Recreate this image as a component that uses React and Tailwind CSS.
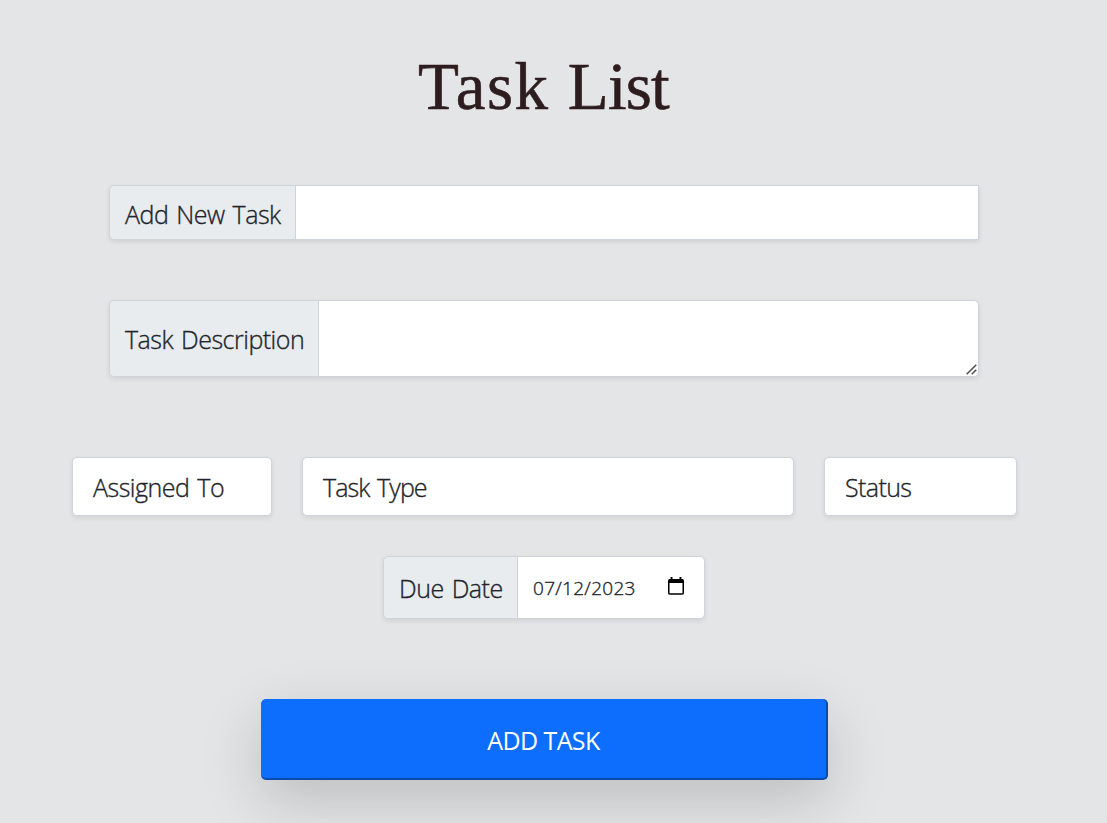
function FieldLabel({ children, className }) {
  return (
    <span
      className={`flex shrink-0 items-center whitespace-nowrap rounded-l-[5px] border border-[#ced4da] bg-[#e9ecef] pl-[15px] text-[25px] leading-[37px] [word-spacing:2px] ${className}`}
    >
      {children}
    </span>
  );
}

function Picker({ children, className }) {
  return (
    <button
      type="button"
      className={`flex h-[59px] items-center whitespace-nowrap rounded-[5px] border border-[#ced4da] bg-white pl-5 pt-0.5 text-left text-[25px] leading-[37px] [word-spacing:2px] shadow-[0_2px_5px_rgba(0,0,0,0.09)] ${className}`}
    >
      {children}
    </button>
  );
}

export default function App() {
  return (
    <main className="flex h-[823px] w-full flex-col overflow-hidden bg-[#e4e5e7] font-['Open_Sans',sans-serif] font-light text-[#212529] [-webkit-text-stroke:0.35px_currentColor]">
      <h1 className="ml-[418px] mt-[44px] h-[84px] whitespace-nowrap font-['Liberation_Serif',serif] text-[67px] font-normal leading-[84px] tracking-[1.5px] text-[#2d1d1f] [-webkit-text-stroke:0.6px_#2d1d1f]">
        Task <span className="tracking-[-0.8px]">List</span>
      </h1>

      <div className="ml-[109px] mt-[57px] flex h-[55px] w-[870px] rounded-l-[5px] shadow-[0_2px_5px_rgba(0,0,0,0.09)]">
        <FieldLabel className="w-[187px] pt-[3px] tracking-[-0.5px]">Add New Task</FieldLabel>
        <input
          aria-label="Add New Task"
          className="-ml-px min-w-0 flex-1 border border-[#ced4da] bg-white px-4 text-[25px] outline-none"
        />
      </div>

      <div className="relative ml-[109px] mt-[60px] flex h-[77px] w-[870px] rounded-[5px] shadow-[0_2px_5px_rgba(0,0,0,0.09)]">
        <FieldLabel className="w-[210px] pt-px tracking-[-0.5px]">Task Description</FieldLabel>
        <textarea
          aria-label="Task Description"
          className="-ml-px min-w-0 flex-1 resize-none rounded-r-[5px] border border-[#ced4da] bg-white px-4 text-[25px] outline-none"
        />
        <svg
          className="absolute bottom-[2px] right-[2px] h-[11px] w-[11px]"
          viewBox="0 0 11 11"
          fill="none"
          stroke="#4b4b4f"
          strokeWidth="1.5"
        >
          <path d="M.7 10.3 10.3.7M5.7 10.3l4.6-4.6" />
        </svg>
      </div>

      <div className="ml-[72px] mt-20 flex gap-[30px]">
        <Picker className="w-[200px] tracking-[-0.5px]">Assigned To</Picker>
        <Picker className="w-[492px] tracking-[-0.9px]">Task Type</Picker>
        <Picker className="w-[193px] tracking-[-0.6px]">Status</Picker>
      </div>

      <div className="ml-[383px] mt-10 flex h-[63px] w-[322px] rounded-[5px] shadow-[0_2px_5px_rgba(0,0,0,0.09)]">
        <FieldLabel className="w-[135px] pt-0.5 tracking-[-0.5px]">Due Date</FieldLabel>
        <div className="-ml-px flex min-w-0 flex-1 items-center justify-between rounded-r-[5px] border border-[#ced4da] bg-white pl-[15px] pr-[20px]">
          <span className="pt-0.5 text-[19px] tracking-[0.3px]">07/12/2023</span>
          <svg className="mb-[3px] h-[18px] w-[16px]" viewBox="0 0 16 18" fill="none">
            <rect x=".75" y="2.75" width="14.5" height="14.25" rx="1" stroke="#000" strokeWidth="1.5" />
            <path d="M1 2h14v4H1zM2.5 0h2v3h-2zM11.5 0h2v3h-2z" fill="#000" />
          </svg>
        </div>
      </div>

      <button
        type="button"
        className="ml-[261px] mt-20 flex h-[81px] w-[567px] shrink-0 items-center justify-center rounded-[5px] border-b-2 border-r-2 border-[#0b4bae] bg-[#0d6efd] pt-1 text-[25px] font-normal leading-[37px] tracking-[-0.6px] text-white [-webkit-text-stroke:0] shadow-[0_20px_60px_rgba(0,0,0,0.175)]"
      >
        ADD TASK
      </button>
    </main>
  );
}
